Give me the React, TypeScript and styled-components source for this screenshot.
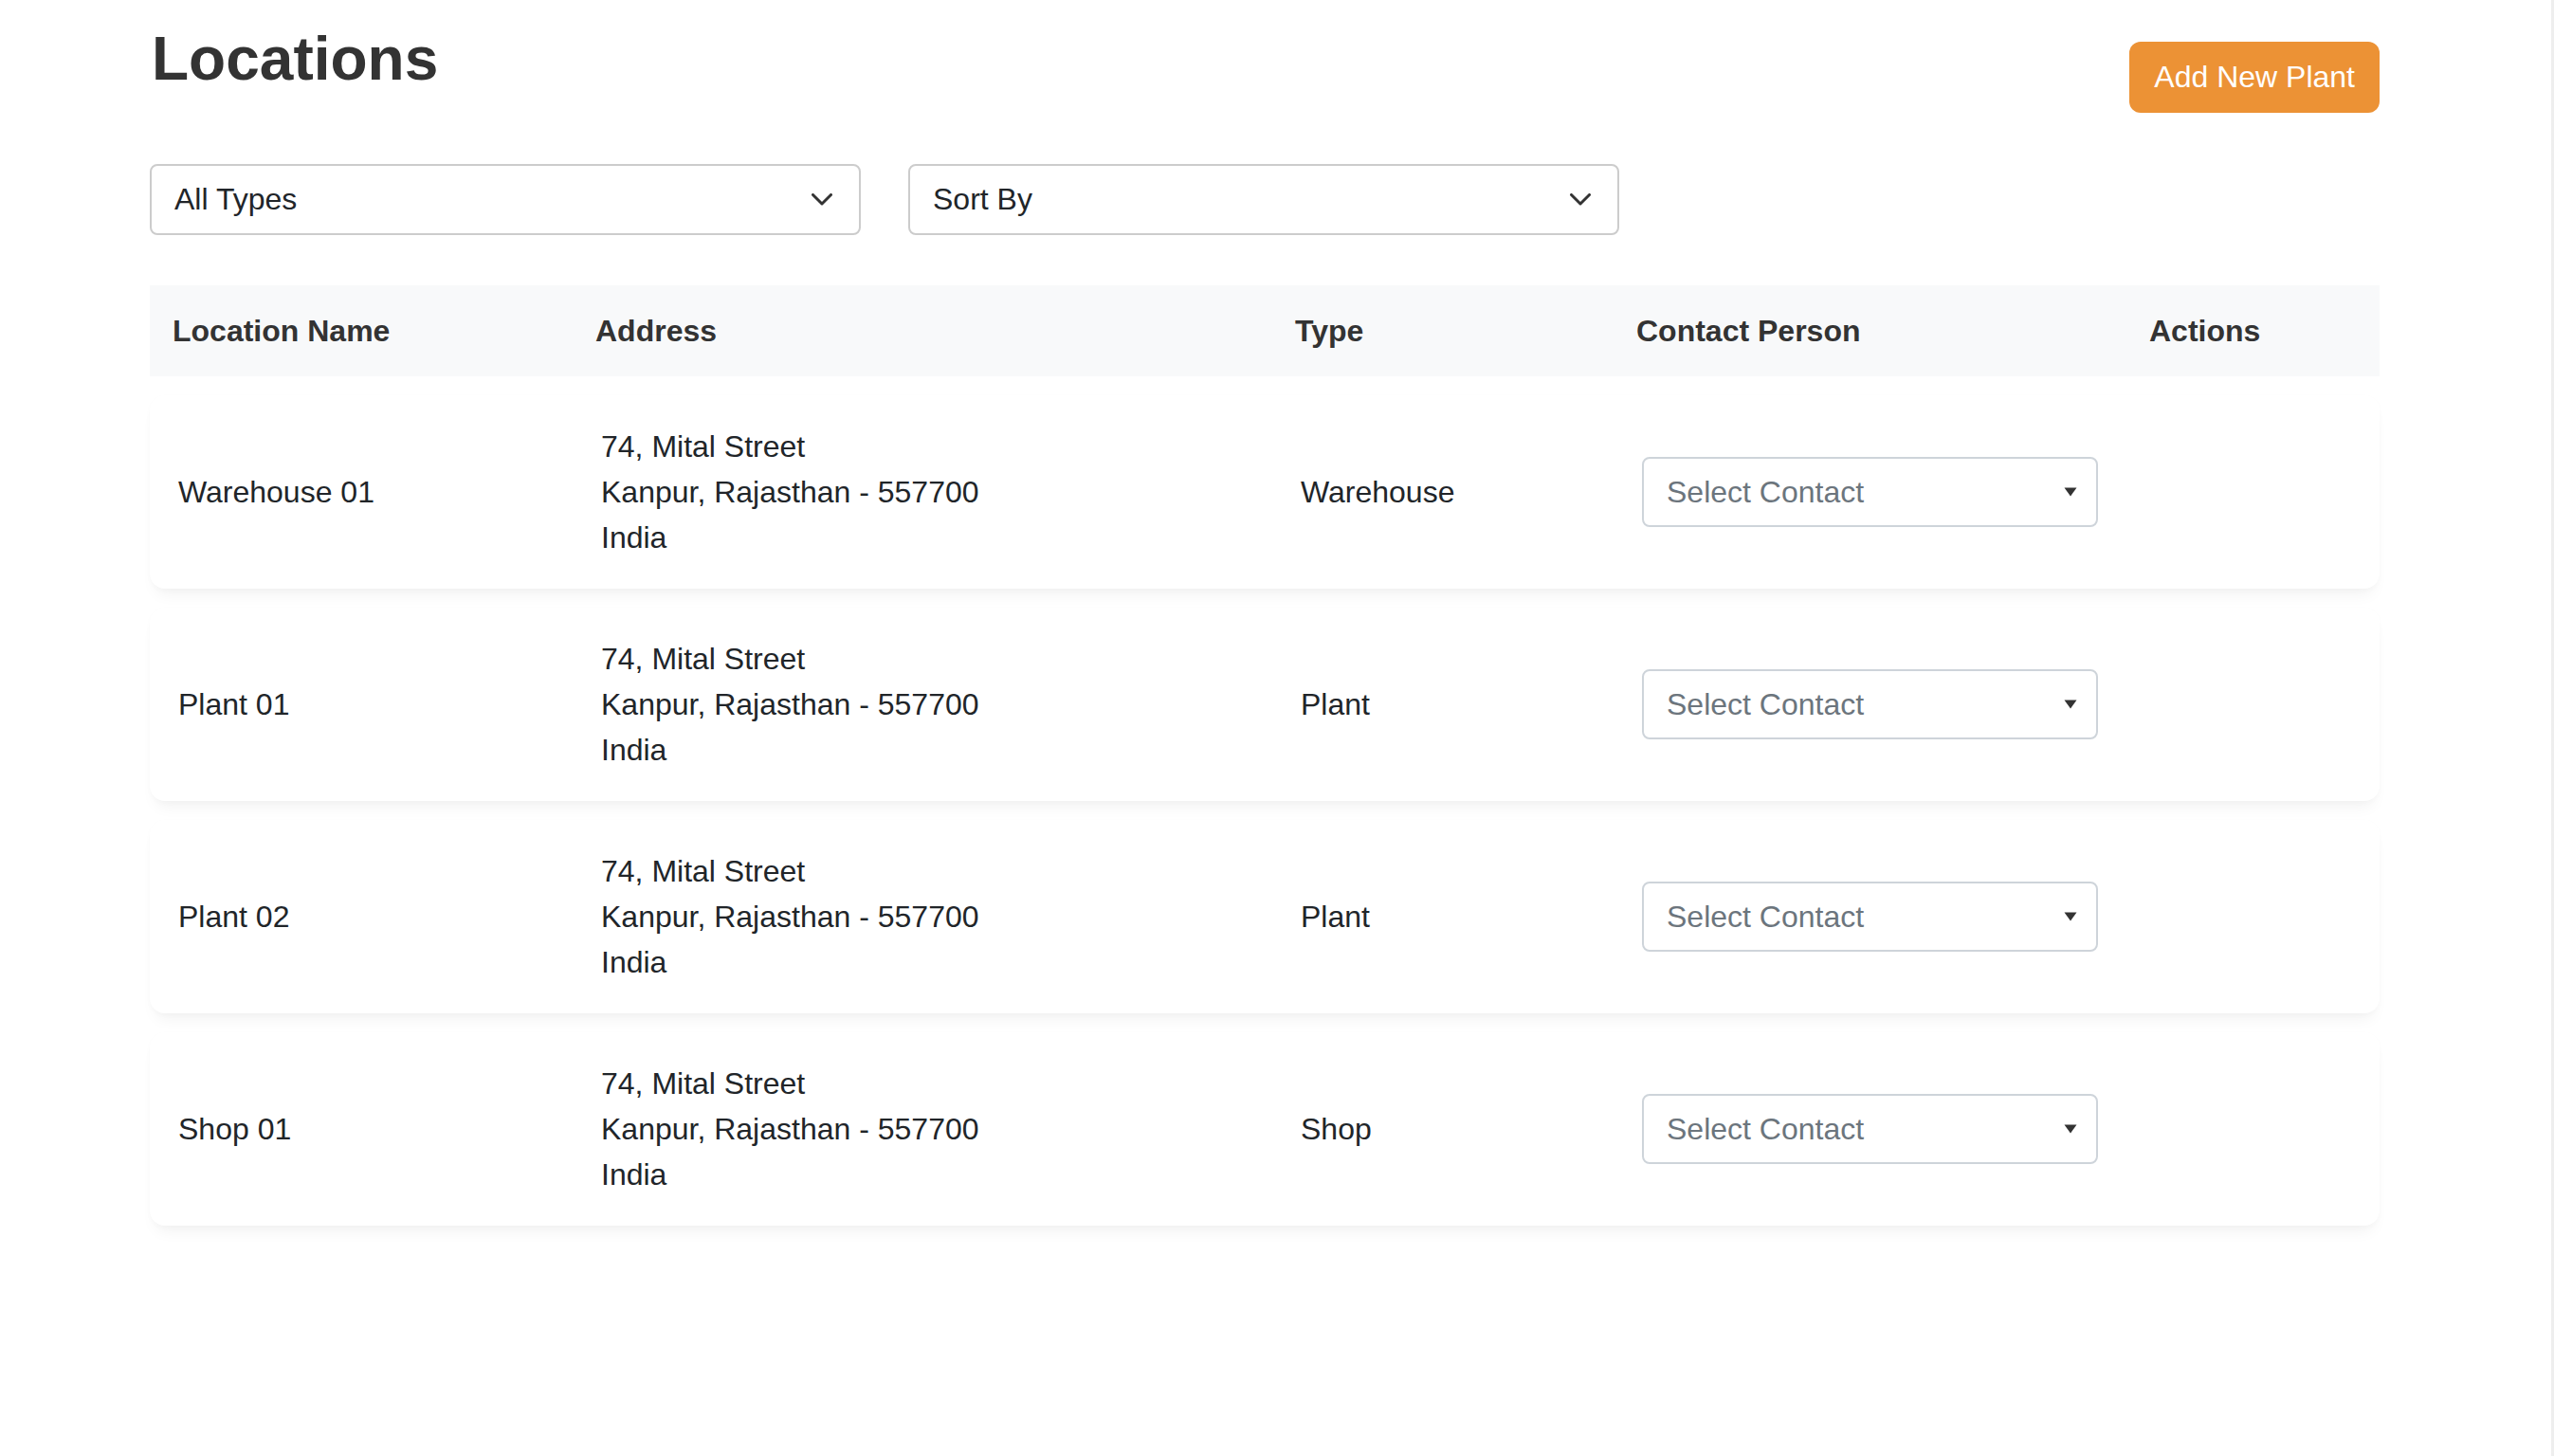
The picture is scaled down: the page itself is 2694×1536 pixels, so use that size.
import React from "react";
import styled, { createGlobalStyle } from "styled-components";

const GlobalStyle = createGlobalStyle`
  html, body {
    margin: 0;
    padding: 0;
    background: #ffffff;
  }
  body {
    font-family: "Liberation Sans", Arial, Helvetica, sans-serif;
    color: #212529;
  }
  * {
    box-sizing: border-box;
  }
`;

type Location = {
  name: string;
  street: string;
  city: string;
  country: string;
  type: string;
};

const locations: Location[] = [
  { name: "Warehouse 01", street: "74, Mital Street", city: "Kanpur, Rajasthan - 557700", country: "India", type: "Warehouse" },
  { name: "Plant 01", street: "74, Mital Street", city: "Kanpur, Rajasthan - 557700", country: "India", type: "Plant" },
  { name: "Plant 02", street: "74, Mital Street", city: "Kanpur, Rajasthan - 557700", country: "India", type: "Plant" },
  { name: "Shop 01", street: "74, Mital Street", city: "Kanpur, Rajasthan - 557700", country: "India", type: "Shop" },
];

const columns = ["Location Name", "Address", "Type", "Contact Person", "Actions"];

const ChevronDown: React.FC = () => (
  <svg width="22" height="13" viewBox="0 0 22 13" fill="none">
    <path d="M1.5 1.5 L11 11 L20.5 1.5" stroke="#333333" strokeWidth="3" strokeLinecap="round" strokeLinejoin="round" />
  </svg>
);

const Caret: React.FC = () => (
  <svg width="14" height="10" viewBox="0 0 14 10">
    <path d="M0.5 0.5 H13.5 L7 9.5 Z" fill="#333333" />
  </svg>
);

const App: React.FC = () => {
  return (
    <Page>
      <GlobalStyle />
      <Container>
        <Header>
          <Title>Locations</Title>
          <AddButton>Add New Plant</AddButton>
        </Header>

        <Filters>
          <FilterSelect>
            <span>All Types</span>
            <ChevronDown />
          </FilterSelect>
          <FilterSelect>
            <span>Sort By</span>
            <ChevronDown />
          </FilterSelect>
        </Filters>

        <HeadRow>
          {columns.map((col) => (
            <HeadCell key={col}>{col}</HeadCell>
          ))}
        </HeadRow>

        <Rows>
          {locations.map((loc) => (
            <RowCard key={loc.name}>
              <Cell>{loc.name}</Cell>
              <Cell>
                <AddressLine>{loc.street}</AddressLine>
                <AddressLine>{loc.city}</AddressLine>
                <AddressLine>{loc.country}</AddressLine>
              </Cell>
              <Cell>{loc.type}</Cell>
              <Cell>
                <ContactSelect>
                  <span>Select Contact</span>
                  <Caret />
                </ContactSelect>
              </Cell>
              <Cell />
            </RowCard>
          ))}
        </Rows>
      </Container>
    </Page>
  );
};

const Page = styled.div`
  min-height: 100vh;
  width: 100%;
  border-right: 3px solid #eeeeee;
  padding-top: 25px;
`;

const Container = styled.div`
  margin-left: 158px;
  width: 2352px;
`;

const Header = styled.div`
  display: flex;
  justify-content: space-between;
  align-items: flex-start;
`;

const Title = styled.h1`
  margin: 0;
  font-size: 64px;
  line-height: 74px;
  font-weight: 700;
  color: #333333;
  padding-left: 2px;
`;

const AddButton = styled.button`
  margin-top: 19px;
  height: 75px;
  padding: 0 26px;
  border: none;
  border-radius: 12px;
  background: #ec9235;
  color: #ffffff;
  font-family: "Liberation Sans", Arial, sans-serif;
  font-size: 32px;
  cursor: pointer;
`;

const Filters = styled.div`
  display: flex;
  gap: 50px;
  margin-top: 54px;
`;

const FilterSelect = styled.div`
  width: 750px;
  height: 75px;
  border: 2px solid #cccccc;
  border-radius: 8px;
  padding: 0 28px 0 24px;
  display: flex;
  align-items: center;
  justify-content: space-between;
  font-size: 32px;
  color: #212529;
  background: #ffffff;
`;

const grid = `
  display: grid;
  grid-template-columns: 446px 738px 360px 541px 267px;
  align-items: center;
`;

const HeadRow = styled.div`
  ${grid}
  margin-top: 53px;
  height: 96px;
  background: #f8f9fa;
`;

const HeadCell = styled.div`
  padding: 0 24px;
  font-size: 32px;
  line-height: 37px;
  font-weight: 700;
  color: #333333;
`;

const Rows = styled.div`
  display: flex;
  flex-direction: column;
  gap: 20px;
  margin-top: 20px;
`;

const RowCard = styled.div`
  ${grid}
  height: 204px;
  background: #ffffff;
  border-radius: 16px;
  box-shadow: 0 12px 16px -6px rgba(0, 0, 0, 0.05), 0 2px 6px rgba(0, 0, 0, 0.02);
`;

const Cell = styled.div`
  padding: 0 30px;
  font-size: 32px;
  line-height: 48px;
  color: #212529;
`;

const AddressLine = styled.div`
  white-space: nowrap;
`;

const ContactSelect = styled.div`
  width: 481px;
  height: 74px;
  border: 2px solid #ced4da;
  border-radius: 8px;
  padding: 0 20px 0 24px;
  display: flex;
  align-items: center;
  justify-content: space-between;
  font-size: 32px;
  color: #6c757d;
  background: #ffffff;
`;

export default App;
